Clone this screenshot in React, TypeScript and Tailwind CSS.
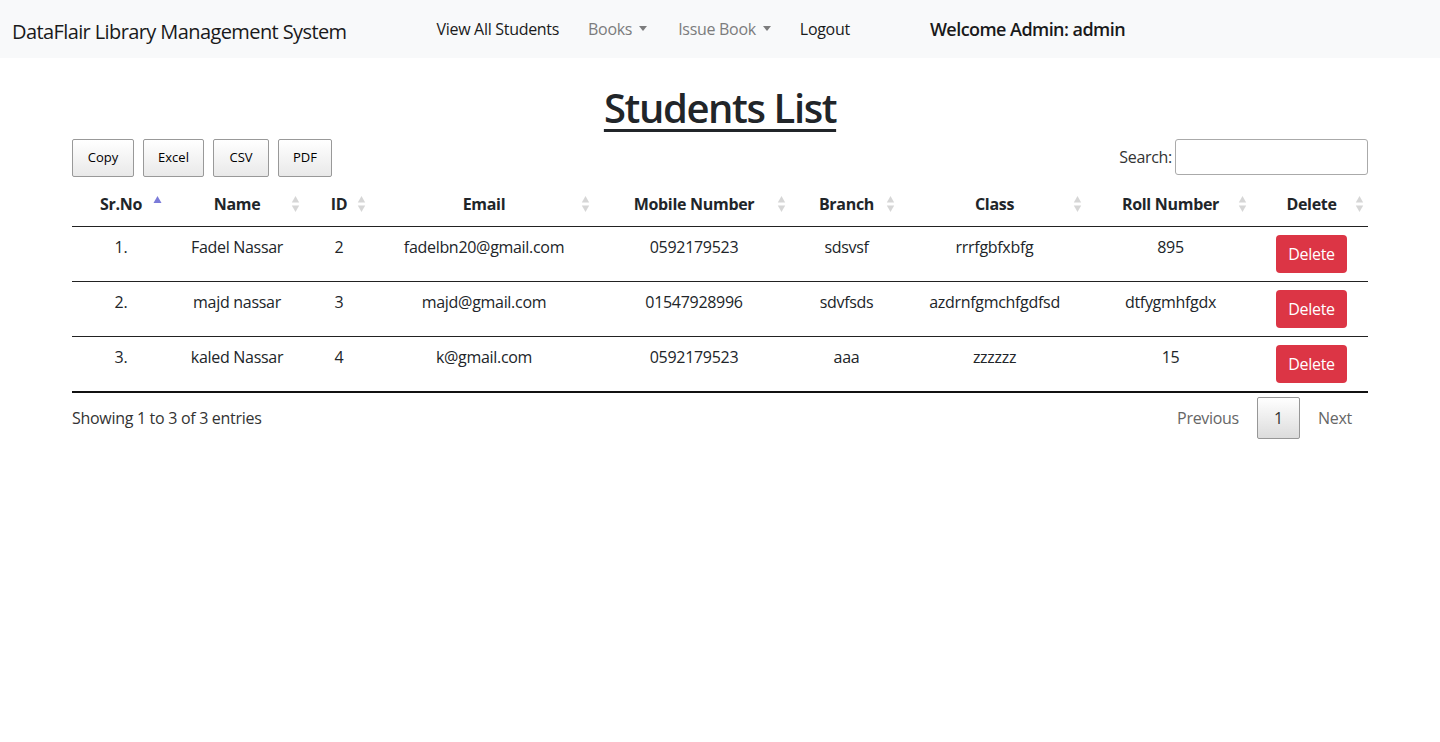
import React from "react";

const cols = [
  { label: "Sr.No", w: 94, sorted: true },
  { label: "Name", w: 138 },
  { label: "ID", w: 66 },
  { label: "Email", w: 224 },
  { label: "Mobile Number", w: 196 },
  { label: "Branch", w: 109 },
  { label: "Class", w: 187 },
  { label: "Roll Number", w: 165 },
  { label: "Delete", w: 117 },
];

const rows = [
  ["1.", "Fadel Nassar", "2", "fadelbn20@gmail.com", "0592179523", "sdsvsf", "rrrfgbfxbfg", "895"],
  ["2.", "majd nassar", "3", "majd@gmail.com", "01547928996", "sdvfsds", "azdrnfgmchfgdfsd", "dtfygmhfgdx"],
  ["3.", "kaled Nassar", "4", "k@gmail.com", "0592179523", "aaa", "zzzzzz", "15"],
];

function SortIcon({ sorted }: { sorted?: boolean }) {
  if (sorted) {
    return (
      <svg width="9" height="18" viewBox="0 0 9 18" className="absolute right-[4px] top-[14px]">
        <path d="M4.5 0 L8.5 7 L0.5 7 Z" fill="#7b7bd9" />
      </svg>
    );
  }
  return (
    <svg width="9" height="18" viewBox="0 0 9 18" className="absolute right-[4px] top-[14px]">
      <path d="M4.5 0 L8.2 6.5 L0.8 6.5 Z" fill="#d6d6d6" />
      <path d="M0.8 9.5 L8.2 9.5 L4.5 16 Z" fill="#d6d6d6" />
    </svg>
  );
}

function Caret() {
  return (
    <span className="ml-[7px] inline-block h-0 w-0 border-x-[4.5px] border-t-[5px] border-x-transparent border-t-[#7c7c7d] align-middle" />
  );
}

export default function App() {
  return (
    <div className="min-h-[742px] bg-white font-['Open_Sans',sans-serif] text-[#212529]">
      <nav className="flex h-[58px] items-center bg-[#f8f9fa] pl-[12px]">
        <div className="mt-[5px] text-[20px] leading-[30px] text-[#1a1a1a] tracking-[-0.6px]">
          DataFlair Library Management System
        </div>
        <div className="ml-[90px] -mt-[1px] flex items-center text-[16px] leading-[24px]">
          <span className="text-[#1a1a1a] tracking-[-0.3px]">View All Students</span>
          <span className="ml-[29px] flex items-center text-[#7c7c7d] tracking-[-0.3px]">
            Books
            <Caret />
          </span>
          <span className="ml-[31px] flex items-center text-[#7c7c7d] tracking-[-0.3px]">
            Issue Book
            <Caret />
          </span>
          <span className="ml-[29px] text-[#1a1a1a] tracking-[-0.3px]">Logout</span>
          <span className="ml-[80px] mt-[1px] text-[18px] font-semibold text-[#1a1a1a] tracking-[-0.55px]">
            Welcome Admin: admin
          </span>
        </div>
      </nav>

      <div className="mx-[72px]">
        <h1 className="mt-[26px] text-center text-[40px] font-semibold leading-[48px] tracking-[-1.4px]">
          <span className="underline decoration-[3px] underline-offset-[6px]">Students List</span>
        </h1>

        <div className="mt-[7px] flex items-start justify-between">
          <div className="flex gap-[9px]">
            {[
              ["Copy", "w-[62px]"],
              ["Excel", "w-[61px]"],
              ["CSV", "w-[56px]"],
              ["PDF", "w-[54px]"],
            ].map(([t, w]) => (
              <button
                key={t}
                className={`${w} h-[38px] rounded-[2px] border border-[#999] bg-gradient-to-b from-white to-[#e9e9e9] text-[13px] text-black`}
              >
                {t}
              </button>
            ))}
          </div>
          <div className="flex items-center">
            <span className="text-[16px] text-[#333] tracking-[-0.3px]">Search:</span>
            <input className="ml-[3px] h-[36px] w-[193px] rounded-[3px] border border-[#aaa] bg-white px-[4px] outline-none" />
          </div>
        </div>

        <table className="mt-[5px] w-full table-fixed border-collapse text-[16px] leading-[24px]">
          <colgroup>
            {cols.map((c) => (
              <col key={c.label} style={{ width: c.w }} />
            ))}
          </colgroup>
          <thead>
            <tr className="border-b border-[#222]">
              {cols.map((c) => (
                <th
                  key={c.label}
                  className="relative h-[44px] pl-[10px] pr-[6px] text-center font-bold tracking-[-0.3px]"
                >
                  {c.label}
                  <SortIcon sorted={c.sorted} />
                </th>
              ))}
            </tr>
          </thead>
          <tbody>
            {rows.map((r, i) => (
              <tr key={i} className={i === rows.length - 1 ? "border-b-2 border-[#111]" : "border-b border-[#222]"}>
                {r.map((v, j) => (
                  <td key={j} className="pl-[10px] pr-[6px] pt-[8px] pb-[8px] text-center align-top tracking-[-0.3px]">
                    {v}
                  </td>
                ))}
                <td className="pl-[10px] pr-[6px] py-[8px] text-center align-top">
                  <button className="h-[38px] w-[71px] rounded-[4px] bg-[#dc3545] text-[16px] text-white tracking-[-0.3px]">
                    Delete
                  </button>
                </td>
              </tr>
            ))}
          </tbody>
        </table>

        <div className="flex items-start justify-between">
          <div className="pt-[13px] text-[16px] leading-[24px] text-[#333] tracking-[-0.3px]">
            Showing 1 to 3 of 3 entries
          </div>
          <div className="flex items-center pt-[4px] text-[16px] leading-[24px]">
            <span className="px-[16px] py-[8px] text-[#666] tracking-[-0.3px]">Previous</span>
            <span className="ml-[2px] rounded-[2px] border border-[#979797] bg-gradient-to-b from-white to-[#dcdcdc] px-[16px] py-[8px] text-[#333]">
              1
            </span>
            <span className="ml-[2px] px-[16px] py-[8px] text-[#666] tracking-[-0.3px]">Next</span>
          </div>
        </div>
      </div>
    </div>
  );
}
